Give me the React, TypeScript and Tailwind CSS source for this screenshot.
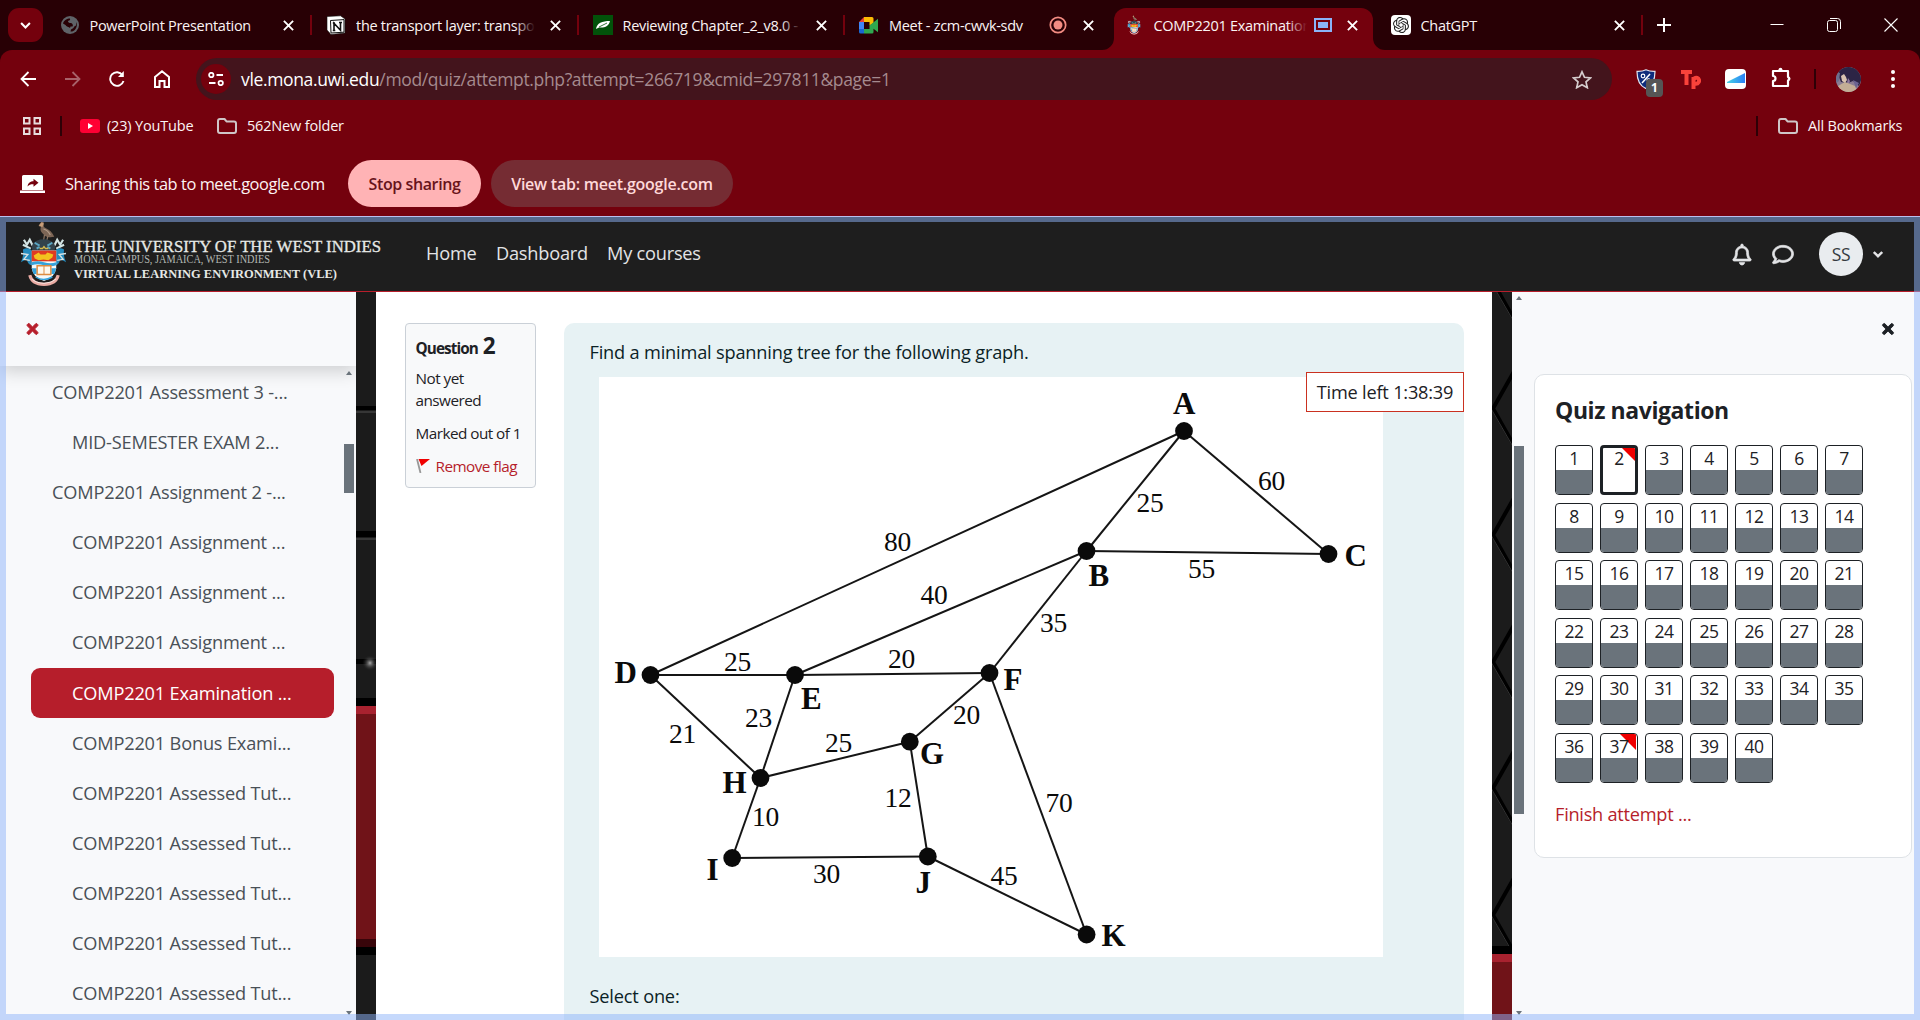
import type { ReactNode } from "react";
import { FaTimes, FaRegBell, FaRegComment } from "react-icons/fa";
import { SiOpenai } from "react-icons/si";

/* ---------- small shared icons ---------- */

function CloseGlyph() {
  return (
    <svg viewBox="0 0 10 10" className="h-[11px] w-[11px]" stroke="#fff" strokeWidth="1.7">
      <path d="M.8.8l8.4 8.4M9.2.8L.8 9.2" />
    </svg>
  );
}

function FolderIcon() {
  return (
    <svg viewBox="0 0 20 16" className="h-4 w-5 shrink-0" fill="none" stroke="#cfc6c7" strokeWidth="2" strokeLinejoin="round">
      <path d="M1 3a2 2 0 012-2h4.500l2 2.400H17a2 2 0 012 2V13a2 2 0 01-2 2H3a2 2 0 01-2-2z" />
    </svg>
  );
}

function Crest({ className }: { className: string }) {
  return (
    <svg viewBox="0 0 48 68" className={className}>
      <path d="M19 5.500L21 2.500c2-2 4-.5 3.500 2C24 6 24 7 26 8c4 1.500 7 4.500 9 9-4 .5-8 .5-10-1.500-2-2-4.500-4-4-7 .2-1.500.7-2.500.5-4z" fill="#7d6656" />
      <path d="M19 6l3-4 2 1-1 4z" fill="#c79d78" />
      <path d="M24 9q4 1 7 6" stroke="#b09a88" strokeWidth="1.200" fill="none" />
      <path d="M25 15l-1 6M28.500 16l-1 4" stroke="#8d7663" strokeWidth="1.200" />
      <path d="M4 20l3 5 3-5 3 6M3 25l8 4M44 20l-3 5-3-5-3 6M45 25l-8 4" stroke="#d3e4e4" strokeWidth="2.200" fill="none" />
      <path d="M13 32q-3-8 4-11 7-3 14 0 7 3 4 11z" fill="#33434c" />
      <path d="M15 23l5 3M33 23l-5 3M17 29l3-2M31 29l-3-2" stroke="#5aa7c4" strokeWidth="2" />
      <path d="M20 29h3l1.500-2 1.500 2h3" stroke="#d9b94c" strokeWidth="1.500" fill="none" />
      <path d="M3 30q5-3 9 1v15q-4-1-5-6-4 1-6 3 3-6 2-13zM45 30q-5-3-9 1v15q4-1 5-6 4 1 6 3-3-6-2-13z" fill="#258cbf" />
      <path d="M1 34l7 1-4 5 6 1M47 34l-7 1 4 5-6 1" stroke="#d9e3e4" strokeWidth="1.400" fill="none" />
      <path d="M12 31h25v18q-1 9-12.500 13Q13 58 12 49z" fill="#f6f8f8" />
      <path d="M12 31h25v11H12z" fill="#e03a22" />
      <path d="M14 36l5-3 2 2h5l2-2 6 2-1 3-4 3-5-1-5 1-4-2z" fill="#f3c21e" />
      <path d="M12 43q6-2 12.500 0T37 43v3q-6 2-12.500 0T12 46z" fill="#35a3dc" />
      <path d="M12 49h5v6h-3zM37 49h-5v6h3z" fill="#35a3dc" />
      <path d="M17.500 46.500h14v9h-14z" fill="#fdf8ee" stroke="#dd8c42" strokeWidth="1.500" />
      <path d="M24.500 46.500v9" stroke="#dd8c42" />
      <path d="M16 58q8 5 17 0" stroke="#35a3dc" strokeWidth="1.500" fill="none" />
      <path d="M10 56q2 9 14.500 9.500Q37 65 39 56" stroke="#e9aaa2" strokeWidth="3.200" fill="none" />
      <path d="M12 60q4 4 12.500 4.500 8-.5 12.500-4.500" stroke="#f7e4e0" strokeWidth="1" fill="none" />
    </svg>
  );
}

/* ---------- browser chrome ---------- */

type TabProps = { icon: ReactNode; title: string; extra?: ReactNode; tone?: string; divider?: boolean };

function Tab({ icon, title, extra, tone = "to-[#280005]", divider = true }: TabProps) {
  return (
    <div className="relative flex h-[50px] w-[266.5px] shrink-0 items-center pl-[14px] pr-[18px]">
      <span className="flex w-5 shrink-0 justify-center">{icon}</span>
      <span className="relative ml-[10px] h-6 min-w-0 flex-1 overflow-hidden whitespace-nowrap text-[14.500px] leading-[26px] tracking-[-0.020em] text-[#fbf4f4]">
        {title}
        <span className={`absolute right-0 top-0 h-6 w-5 bg-linear-to-r from-transparent ${tone}`} />
      </span>
      {extra}
      <span className="ml-[15px]">
        <CloseGlyph />
      </span>
      {divider && <span className="absolute right-0 top-[15px] h-5 w-[2px] bg-[#74010d]" />}
    </div>
  );
}

function TabStrip() {
  return (
    <div className="flex h-[50px] items-center bg-[#280005]">
      <div className="ml-2 mr-[2.500px] flex h-[34px] w-[35px] shrink-0 items-center justify-center rounded-[11px] bg-[#74010d]">
        <svg viewBox="0 0 10 6" className="h-[7px] w-[11px]" fill="none" stroke="#fff" strokeWidth="1.900">
          <path d="M1 .8l4 4 4-4" />
        </svg>
      </div>
      <Tab
        title="PowerPoint Presentation"
        icon={
          <svg viewBox="0 0 18 18" className="h-[18px] w-[18px]">
            <circle cx="9" cy="9" r="9" fill="#5f6368" />
            <path d="M2 7.500C3 4 6 2.500 9 2.500c.5 1.500-.5 2-2 2.500 0 1.500 1 2 3 2 1.500.5 2.500 2 1.500 3.500H9.500L9 12c-1-1-4-1.500-4.500-3z" fill="#280005" />
            <path d="M15.500 6c.8 2 .5 5-1 7-1.500 2-3.500 2.800-5 2.500l.5-2 2.500-1.500c.5-1.500 1-2 2.500-2.500z" fill="#280005" />
          </svg>
        }
      />
      <Tab
        title="the transport layer: transpo"
        icon={
          <svg viewBox="0 0 20 20" className="h-5 w-5">
            <path d="M1 1.500L14.500.8 19 4v14l-14 1.500L1 15z" fill="#fff" stroke="#111" strokeWidth=".6" />
            <path d="M4.500 5.500L18 4.600v12.600L5 18z" fill="#fff" stroke="#111" strokeWidth="1" />
            <path d="M8 15.500V8.200l6.500 7V7.500M6.800 8h2.200M13 7.500h3M6.800 15.500h2.500" fill="none" stroke="#111" strokeWidth="1.600" />
          </svg>
        }
      />
      <Tab
        title="Reviewing Chapter_2_v8.0 -"
        icon={
          <svg viewBox="0 0 20 20" className="h-5 w-5">
            <path d="M0 0h20v20H0z" fill="#02520a" />
            <path d="M3 14c1-6 6-8 14-8-1 5-5 7-11 6.500z" fill="#fff" />
            <path d="M6 12l8-4" stroke="#02520a" strokeWidth=".8" />
          </svg>
        }
      />
      <Tab
        title="Meet - zcm-cwvk-sdv"
        divider={false}
        extra={
          <svg viewBox="0 0 18 18" className="mr-px h-[18px] w-[18px]">
            <circle cx="9" cy="9" r="7.700" fill="none" stroke="#f28b82" strokeWidth="1.700" />
            <circle cx="9" cy="9" r="4.500" fill="#f28b82" />
          </svg>
        }
        icon={
          <svg viewBox="0 0 20 17" className="h-[17px] w-5">
            <path d="M0 5l5-5v5z" fill="#ea4335" />
            <path d="M5 0h8a1.500 1.500 0 011.500 1.500V6l-4 2.500V5H5z" fill="#fbbc04" />
            <path d="M0 5h5v7H0z" fill="#4285f4" />
            <path d="M0 12h5v4.500H1.500A1.500 1.500 0 010 15z" fill="#1967d2" />
            <path d="M5 12h5.500V8.500L19 1.800v13.400l-4.500-3.500V15a1.500 1.500 0 01-1.500 1.500H5z" fill="#2fa84f" />
          </svg>
        }
      />
      <div className="relative ml-[2px] mt-2 flex h-[42px] w-[259px] shrink-0 items-start rounded-t-[12px] bg-[#74010d]">
        <svg viewBox="0 0 12 12" className="absolute -left-[12px] bottom-0 h-3 w-3" fill="#74010d">
          <path d="M12 0v12H0A12 12 0 0012 0z" />
        </svg>
        <svg viewBox="0 0 12 12" className="absolute -right-[12px] bottom-0 h-3 w-3" fill="#74010d">
          <path d="M0 0v12h12A12 12 0 010 0z" />
        </svg>
        <div className="-ml-[4px] -mt-2">
          <Tab
            title="COMP2201 Examination"
            tone="to-[#74010d]"
            divider={false}
            icon={<Crest className="h-[20px] w-[14px]" />}
            extra={
              <svg viewBox="0 0 18 14" className="ml-[7px] h-[14px] w-[18px] shrink-0">
                <path d="M1 1h16v12H1z" fill="none" stroke="#8ab4f8" strokeWidth="2" />
                <path d="M4 4h10v6H4z" fill="#8ab4f8" />
              </svg>
            }
          />
        </div>
      </div>
      <div className="ml-[4px]">
        <Tab
          title="ChatGPT"
          icon={
            <span className="flex h-5 w-5 items-center justify-center rounded-[4px] bg-white">
              <SiOpenai className="h-4 w-4 text-[#222]" />
            </span>
          }
        />
      </div>
      <svg viewBox="0 0 14 14" className="ml-[14px] h-[14px] w-[14px]" stroke="#fff" strokeWidth="2">
        <path d="M7 0v14M0 7h14" />
      </svg>
      <div className="ml-auto flex items-center gap-[43px] pr-[22px]">
        <svg viewBox="0 0 14 14" className="h-[14px] w-[14px]" stroke="#fff" strokeWidth="1">
          <path d="M.5 6.500h13" />
        </svg>
        <svg viewBox="0 0 14 14" className="h-[14px] w-[14px]" fill="none" stroke="#fff" strokeWidth="1">
          <rect x=".5" y="2.500" width="10" height="11" rx="2" />
          <path d="M3 .5h7.500a3 3 0 013 3V11" />
        </svg>
        <svg viewBox="0 0 14 14" className="h-[14px] w-[14px]" stroke="#fff" strokeWidth="1.100">
          <path d="M.5.500l13 13M13.500.500l-13 13" />
        </svg>
      </div>
    </div>
  );
}

function Toolbar() {
  return (
    <div className="flex h-[58px] items-center pl-5 pr-[25px]">
      <svg viewBox="0 0 16 16" className="h-4 w-4" fill="none" stroke="#fff" strokeWidth="1.800">
        <path d="M16 8H1.500M8.500 1L1.500 8l7 7" />
      </svg>
      <svg viewBox="0 0 16 16" className="ml-[29px] h-4 w-4" fill="none" stroke="#a8626a" strokeWidth="1.800">
        <path d="M0 8h14.500M7.500 1l7 7-7 7" />
      </svg>
      <svg viewBox="0 0 16 16" className="ml-[28px] h-4 w-4" fill="none" stroke="#fff" strokeWidth="1.900">
        <path d="M14.500 10A6.800 6.800 0 1113.500 4" />
        <path d="M14.800 0v6H9z" fill="#fff" stroke="none" />
      </svg>
      <svg viewBox="0 0 16 18" className="ml-[29px] h-[18px] w-4" fill="none" stroke="#fff" strokeWidth="2">
        <path d="M1 7l7-5.700L15 7v10h-4.500v-6h-5v6H1z" />
      </svg>
      <div className="ml-[26px] flex h-[42px] w-[1416px] items-center rounded-full bg-[#43141c] pl-[5px] pr-5">
        <div className="flex h-[30px] w-[30px] items-center justify-center rounded-full bg-[#74010d]">
          <svg viewBox="0 0 16 14" className="h-[14px] w-4" fill="none" stroke="#fff" strokeWidth="1.800">
            <circle cx="3.300" cy="3" r="2.200" />
            <circle cx="12.700" cy="11" r="2.200" />
            <path d="M8.500 3H15M1 11h6.500" />
          </svg>
        </div>
        <p className="ml-[10px] whitespace-nowrap pt-px text-[17.500px] tracking-[-0.020em] text-[#a58a8e]">
          <span className="text-white">vle.mona.uwi.edu</span>/mod/quiz/attempt.php?attempt=266719&amp;cmid=297811&amp;page=1
        </p>
        <svg viewBox="0 0 20 19" className="ml-auto h-[19px] w-5" fill="none" stroke="#d5cccd" strokeWidth="1.700">
          <path d="M10 1.800l2.500 5.500 6 .6-4.500 4 1.300 5.800L10 14.700l-5.300 3 1.300-5.800-4.500-4 6-.6z" />
        </svg>
      </div>
      <span className="relative ml-[24px]">
        <svg viewBox="0 0 20 20" className="h-5 w-5">
          <path d="M10 .8c3 1.500 6 1.700 9 1.600 0 8-2 14-9 17.200C3 16.400 1 10.400 1 2.400c3 .1 6-.1 9-1.600z" fill="#0f2c7c" stroke="#dfe4ef" strokeWidth="1.200" />
          <path d="M6 14l8-9" stroke="#fff" strokeWidth="1.500" />
          <circle cx="7" cy="7" r="1.800" fill="none" stroke="#fff" strokeWidth="1.200" />
          <circle cx="12.500" cy="11" r="1.500" fill="none" stroke="#fff" />
        </svg>
        <span className="absolute left-[10px] top-[10px] flex h-[18px] w-[17px] items-center justify-center rounded-[4px] bg-[#555] text-[12px] font-bold leading-none text-white">
          1
        </span>
      </span>
      <span className="ml-[25px] flex w-5 text-[#f9423a]">
        <svg viewBox="0 0 20 20" className="h-5 w-5" fill="none" stroke="#f9423a" strokeWidth="4">
          <path d="M0 3h11M5.500 3v13M12.500 8v12M12.500 11.500a2.800 2.800 0 115 1.800 2.800 2.800 0 01-5 0" />
        </svg>
      </span>
      <span className="ml-[24px] flex h-5 w-[21px] items-center overflow-hidden rounded-[4px] bg-white">
        <svg viewBox="0 0 21 20" className="h-5 w-[21px]">
          <defs>
            <linearGradient id="wedge" x1="0" y1="0" x2="1" y2="0">
              <stop offset="0" stopColor="#46d3e6" />
              <stop offset="1" stopColor="#2b7ff5" />
            </linearGradient>
          </defs>
          <path d="M2 13L20 4v10H2z" fill="url(#wedge)" />
        </svg>
      </span>
      <svg viewBox="0 0 21 21" className="ml-[25px] -mt-1 h-[21px] w-[21px]" fill="none" stroke="#fff" strokeWidth="2.200" strokeLinejoin="round">
        <path d="M2 4h15v6a2 2 0 010 3.500V19H2v-5a2.500 2.500 0 000-5z" />
        <path d="M7.500 3.500a2 2 0 014 0zM17.500 9.800a2 2 0 010 4z" fill="#fff" stroke="none" />
        <circle cx="9.500" cy="2.500" r="1.800" fill="#fff" stroke="none" />
      </svg>
      <span className="ml-[22px] h-5 w-[2px] bg-[#2d0006]" />
      <svg viewBox="0 0 25 25" className="ml-[20px] h-[25px] w-[25px]">
        <clipPath id="face">
          <circle cx="12.500" cy="12.500" r="12.500" />
        </clipPath>
        <g clipPath="url(#face)">
          <path d="M0 0h25v25H0z" fill="#8b7d94" />
          <path d="M3 3l8-4 11 3 4 9-3 8-6-5-5 2-7-1-3-7z" fill="#2c2445" />
          <path d="M5 9l3-2 2 3 1 3-2 3-3-2z" fill="#d9c3b0" />
          <path d="M12 11l2 3-1 2-2 0z" fill="#8f7aa0" />
          <path d="M2 19l7-4 5 2 5 2 3 6H4z" fill="#c3ae96" />
          <path d="M17 13l6 3-3 5z" fill="#6a6391" />
          <path d="M0 5l4 1-1 8-3 2z" fill="#6c6f8d" />
        </g>
      </svg>
      <svg viewBox="0 0 4 18" className="ml-auto h-[18px] w-1" fill="#fff">
        <circle cx="2" cy="2" r="2" />
        <circle cx="2" cy="9" r="2" />
        <circle cx="2" cy="16" r="2" />
      </svg>
    </div>
  );
}

function BookmarksBar() {
  return (
    <div className="flex h-[36px] items-center pl-[23px] pr-[18px] text-[14.500px] tracking-[-0.012em] text-[#fbf4f4]">
      <svg viewBox="0 0 18 18" className="h-[18px] w-[18px]" fill="none" stroke="#e8dcdd" strokeWidth="2">
        <path d="M1 1h5.500v5.500H1zM11.500 1H17v5.500h-5.500zM1 11.500h5.500V17H1zM11.500 11.500H17V17h-5.500z" />
      </svg>
      <span className="ml-[19px] h-5 w-[2px] bg-[#2d0006]" />
      <svg viewBox="0 0 20 14" className="ml-[18px] h-[14px] w-5">
        <rect width="20" height="14" rx="3" fill="#ff0033" />
        <path d="M8 4l5 3-5 3z" fill="#fff" />
      </svg>
      <span className="ml-[7px] w-[87px] whitespace-nowrap">(23) YouTube</span>
      <span className="ml-[23px] mr-[10px] flex">
        <FolderIcon />
      </span>
      <span className="whitespace-nowrap">562New folder</span>
      <span className="ml-auto mr-[20px] h-5 w-[2px] bg-[#2d0006]" />
      <FolderIcon />
      <span className="ml-[10px] w-[94px] whitespace-nowrap">All Bookmarks</span>
    </div>
  );
}

function SharingBar() {
  return (
    <div className="flex h-[72px] items-center pl-5 pt-[7px] text-[16.400px] tracking-[-0.027em]">
      <svg viewBox="0 0 25 18" className="h-[18px] w-[25px]">
        <path d="M2 1.500A1.500 1.500 0 013.500 0h18A1.500 1.500 0 0123 1.500V15H2zM0 15.500h25V18H0z" fill="#fff" />
        <path d="M7.500 11.500c.5-4 3-5.200 6-5.300V3.800l5 4-5 4V9.300c-2.500-.1-4.500.5-6 2.200z" fill="#74010d" />
      </svg>
      <span className="ml-5 w-[262px] whitespace-nowrap pt-[2px] text-[#fdf3f3]">Sharing this tab to meet.google.com</span>
      <span className="ml-[21px] flex h-[47px] w-[133px] items-center justify-center rounded-full bg-[#ffb3b5] pt-px text-[16px] font-semibold tracking-[-0.025em] text-[#68131b]">
        Stop sharing
      </span>
      <span className="ml-[10px] flex h-[47px] w-[242px] items-center justify-center rounded-full bg-[#752c33] pt-px text-[16px] font-semibold tracking-[-0.015em] text-[#ffd9da]">
        View tab: meet.google.com
      </span>
    </div>
  );
}

/* ---------- site header ---------- */

function SiteHeader() {
  return (
    <header className="flex h-[76px] items-center border-b border-[#b61e2b] bg-[#1e1e1e] pt-[1px] text-[#e3e4e6]">
      <Crest className="mt-[-1px] ml-5 h-[67px] w-[47px] shrink-0" />
      <svg
        viewBox="0 0 310 48"
        className="ml-[5px] h-12 w-[310px] overflow-visible font-['Liberation_Serif',serif]"
        fill="#e6e9e6"
      >
        <text x="2" y="21.500" fontSize="17.500" textLength="307" lengthAdjust="spacingAndGlyphs" stroke="#e6e9e6" strokeWidth=".3">
          THE UNIVERSITY OF THE WEST INDIES
        </text>
        <text x="2" y="33" fontSize="12" textLength="196" lengthAdjust="spacingAndGlyphs" fill="#b3b8b3">
          MONA CAMPUS, JAMAICA, WEST INDIES
        </text>
        <text x="2" y="47.500" fontSize="13.500" fontWeight="bold" textLength="263" lengthAdjust="spacingAndGlyphs">
          VIRTUAL LEARNING ENVIRONMENT (VLE)
        </text>
      </svg>
      <nav className="ml-[44px] flex gap-5 whitespace-nowrap text-[18.200px] tracking-[-0.012em]">
        <span className="w-[50px]">Home</span>
        <span className="w-[91px]">Dashboard</span>
        <span>My courses</span>
      </nav>
      <div className="ml-auto flex items-center pr-[37px]">
        <FaRegBell className="h-[21px] w-5 overflow-visible" stroke="currentColor" strokeWidth="18" />
        <FaRegComment className="ml-5 h-[21px] w-[22px] overflow-visible" stroke="currentColor" strokeWidth="18" />
        <span className="ml-[25px] flex h-11 w-11 items-center justify-center rounded-full bg-[#e9ecef] text-[17.500px] tracking-[-0.020em] text-[#343a40]">
          SS
        </span>
        <svg viewBox="0 0 10 7" className="ml-[10px] h-[7px] w-[10px]" fill="none" stroke="#e3e4e6" strokeWidth="2.400">
          <path d="M.8 1L5 5.200 9.200 1" />
        </svg>
      </div>
    </header>
  );
}

/* ---------- course index ---------- */

const courseIndex = [
  { label: "COMP2201 Assessment 3 -...", top: true },
  { label: "MID-SEMESTER EXAM 2..." },
  { label: "COMP2201 Assignment 2 -...", top: true },
  { label: "COMP2201 Assignment ..." },
  { label: "COMP2201 Assignment ..." },
  { label: "COMP2201 Assignment ..." },
  { label: "COMP2201 Examination ...", active: true },
  { label: "COMP2201 Bonus Exami..." },
  { label: "COMP2201 Assessed Tut..." },
  { label: "COMP2201 Assessed Tut..." },
  { label: "COMP2201 Assessed Tut..." },
  { label: "COMP2201 Assessed Tut..." },
  { label: "COMP2201 Assessed Tut..." },
];

function CourseIndex() {
  return (
    <aside className="relative flex w-[356px] shrink-0 flex-col overflow-hidden bg-[#f8f9fb]">
      <div className="z-10 flex h-[74px] shrink-0 items-center bg-[#f8f9fb] pl-[26px] shadow-[0_6px_16px_rgba(0,0,0,0.16)]">
        <FaTimes className="h-4 w-[13px] overflow-visible text-[#b61e2b]" stroke="currentColor" strokeWidth="30" />
      </div>
      <ul className="mt-[1.300px] flex flex-col pl-[31px] pr-[22px] text-[18.200px] tracking-[-0.010em] text-[#495057]">
        {courseIndex.map((item, i) => (
          <li
            key={i}
            className={`flex h-[50.150px] shrink-0 items-center whitespace-nowrap rounded-[9px] ${item.top ? "pl-[21px]" : "pl-[41px]"} ${
              item.active ? "bg-[#b61e2b] text-white" : ""
            }`}
          >
            {item.label}
          </li>
        ))}
      </ul>
      <span className="absolute left-[344px] top-[152px] h-[49px] w-[10px] bg-[#6a737b]" />
      <span className="absolute left-[346px] top-[79px] z-20 border-x-[3px] border-b-[4px] border-x-transparent border-b-[#6a737b]" />
      <span className="absolute left-[346px] top-[719px] border-x-[3px] border-t-[4px] border-x-transparent border-t-[#6a737b]" />
    </aside>
  );
}

/* ---------- patterned page backdrop visible between columns ---------- */

function LeftBackdrop() {
  return (
    <svg viewBox="0 0 20 728" className="h-[728px] w-5 shrink-0">
      <defs>
        <radialGradient id="spark">
          <stop offset="0" stopColor="#aaa" />
          <stop offset="1" stopColor="#1b1b1b" stopOpacity="0" />
        </radialGradient>
      </defs>
      <path d="M0 0h20v728H0z" fill="#1b1b1b" />
      <path d="M0 114h20v4H0zM0 239h20v6H0zM0 367h20v5H0zM0 406h20v8H0zM0 655h20v8H0z" fill="#000" />
      <path d="M0 119h20v2H0zM0 246h20v2H0z" fill="#363636" />
      <circle cx="14" cy="371" r="8" fill="url(#spark)" />
      <path d="M0 414h20v8H0z" fill="#a8222f" />
      <path d="M0 422h20v225H0z" fill="#701318" />
      <path d="M0 647h20v8H0z" fill="#38050a" />
    </svg>
  );
}

function RightBackdrop() {
  const notches = [-10, 116.500, 243, 370, 496, 623];
  return (
    <svg viewBox="0 0 20 728" className="h-[728px] w-5 shrink-0">
      <path d="M0 0h20v728H0z" fill="#1b1b1b" />
      {notches.map((y) => (
        <g key={y} fill="none">
          <path d={`M22 ${y - 37}L1 ${y}L22 ${y + 37}`} stroke="#000" strokeWidth="4" />
          <path d={`M-1 ${y}L22 ${y + 40}`} stroke="#333" strokeWidth="1" />
        </g>
      ))}
      <path d="M0 654h20v8H0z" fill="#000" />
      <path d="M0 662h20v8H0z" fill="#a8222f" />
      <path d="M0 670h20v58H0z" fill="#701318" />
    </svg>
  );
}

/* ---------- weighted graph ---------- */

const nodes: Record<string, { x: number; y: number; lx: number; ly: number }> = {
  A: { x: 1184, y: 431, lx: 1173, ly: 413.5 },
  B: { x: 1086.5, y: 551, lx: 1088.5, ly: 585.5 },
  C: { x: 1328.5, y: 554, lx: 1344.5, ly: 565.5 },
  D: { x: 650.5, y: 675, lx: 614.5, ly: 683 },
  E: { x: 795, y: 675, lx: 801, ly: 708.5 },
  F: { x: 989.5, y: 673, lx: 1003.5, ly: 689.5 },
  G: { x: 909.8, y: 741.7, lx: 920, ly: 764 },
  H: { x: 760.5, y: 778, lx: 722.5, ly: 793 },
  I: { x: 732.2, y: 858, lx: 706.5, ly: 879.5 },
  J: { x: 927.8, y: 856.5, lx: 915.5, ly: 892.5 },
  K: { x: 1086.6, y: 934.5, lx: 1101.5, ly: 945.5 },
};

const edges: [string, string, number, number, number][] = [
  ["A", "D", 80, 884, 550.5],
  ["B", "E", 40, 920.5, 603.5],
  ["D", "E", 25, 724, 670.5],
  ["E", "F", 20, 888, 668],
  ["B", "F", 35, 1040, 632],
  ["A", "B", 25, 1136.5, 512],
  ["A", "C", 60, 1258, 489.5],
  ["B", "C", 55, 1188, 578],
  ["D", "H", 21, 669, 742.5],
  ["E", "H", 23, 745, 726.5],
  ["H", "G", 25, 825, 751.5],
  ["F", "G", 20, 953, 724],
  ["H", "I", 10, 752, 825.5],
  ["G", "J", 12, 884.5, 806.5],
  ["I", "J", 30, 813, 883],
  ["J", "K", 45, 990.5, 884.5],
  ["F", "K", 70, 1045.5, 811.5],
];

function Graph() {
  return (
    <svg viewBox="599 377 784 580" className="h-[580px] w-[784px] bg-white font-['Liberation_Serif',serif]" fill="#0a0a0a">
      {edges.map(([a, b, w, x, y]) => (
        <g key={a + b}>
          <line x1={nodes[a].x} y1={nodes[a].y} x2={nodes[b].x} y2={nodes[b].y} stroke="#151515" strokeWidth="2" />
          <text x={x} y={y} fontSize="27.500">
            {w}
          </text>
        </g>
      ))}
      {Object.entries(nodes).map(([name, n]) => (
        <g key={name}>
          <circle cx={n.x} cy={n.y} r="8.900" />
          <text x={n.lx} y={n.ly} fontSize="31" fontWeight="bold">
            {name}
          </text>
        </g>
      ))}
    </svg>
  );
}

/* ---------- question ---------- */

function QuestionInfo() {
  return (
    <div className="h-[165px] w-[131px] shrink-0 rounded-[4px] border border-[#cad0d7] bg-[#f8f9fa] pl-[9.500px] pt-[7px] text-[15.300px] leading-[22px] tracking-[-0.035em] text-[#1d2125]">
      <h3 className="flex h-[30px] items-baseline gap-[5px] whitespace-nowrap font-bold leading-[30px] tracking-[-0.060em]">
        Question <span className="text-[22.500px]">2</span>
      </h3>
      <p className="mt-[6px]">
        Not yet
        <br />
        answered
      </p>
      <p className="mt-[11px] whitespace-nowrap">Marked out of 1</p>
      <p className="mt-[11px] flex items-center whitespace-nowrap text-[#b61e2b]">
        <svg viewBox="0 0 14 14" className="mr-[6px] h-[14px] w-[14px]">
          <path d="M1 0l3.500 14" stroke="#999" strokeWidth="1.800" />
          <path d="M2.500 0H14L5.500 7z" fill="#f00000" />
        </svg>
        Remove flag
      </p>
    </div>
  );
}

function Question() {
  return (
    <main className="relative flex w-[1116px] shrink-0 items-start bg-white pl-[29px] pt-[31px]">
      <QuestionInfo />
      <section className="ml-7 h-[697px] w-[900px] shrink-0 rounded-t-[10px] bg-[#e7f2f4] pl-[25.500px] pt-[15px] text-[18.200px] leading-7 tracking-[-0.010em] text-[#0b2226]">
        <p>Find a minimal spanning tree for the following graph.</p>
        <div className="ml-[9.500px] mt-[11px] h-[580px]">
          <Graph />
        </div>
        <p className="mt-[25px]">Select one:</p>
      </section>
      <div className="absolute right-[28px] top-[80px] flex h-10 w-[158px] items-center justify-center whitespace-nowrap border border-[#ca3120] bg-white pt-[2px] text-[18.200px] tracking-[-0.012em] text-[#1d2125]">
        Time left 1:38:39
      </div>
    </main>
  );
}

/* ---------- quiz navigation ---------- */

function NavButton({ n }: { n: number }) {
  const current = n === 2;
  const flagged = n === 2 || n === 37;
  return (
    <span
      className={`relative flex h-[50px] w-[38px] flex-col overflow-hidden rounded-[4px] border-[#1d2125] bg-white text-center text-[17.500px] leading-[25px] tracking-[-0.030em] text-[#1d2125] ${
        current ? "border-[3px]" : "border"
      }`}
    >
      {flagged && (
        <svg
          viewBox="0 0 16 16"
          className={current ? "absolute right-0 top-0 h-[13px] w-[13px]" : "absolute right-[1px] top-0 h-4 w-4"}
          fill="#f00000"
        >
          <path d="M0 0h16v16z" />
        </svg>
      )}
      <span className={current ? "relative -mt-[2px] h-6" : "relative h-6"}>{n}</span>
      {!current && <span className="flex-1 bg-[#6a737b]" />}
    </span>
  );
}

function QuizSidebar() {
  return (
    <aside className="relative flex-1 bg-[#f8f9fb] pl-[22px]">
      <div className="flex h-[82px] items-center justify-end pb-[9px] pr-[25px]">
        <FaTimes className="h-4 w-[14px] overflow-visible text-[#1d2125]" stroke="currentColor" strokeWidth="30" />
      </div>
      <section className="h-[484px] w-[378px] rounded-[10px] border border-[#dee2e6] bg-white pl-5 pt-[19px]">
        <h2 className="text-[23px] font-bold leading-[32px] tracking-[-0.018em] text-[#1d2125]">Quiz navigation</h2>
        <div className="mt-[19px] grid w-[315px] grid-cols-7 gap-y-[7.600px]">
          {Array.from({ length: 40 }, (_, i) => (
            <NavButton key={i} n={i + 1} />
          ))}
        </div>
        <a className="mt-[17px] block text-[18.200px] leading-7 tracking-[-0.014em] text-[#b61e2b]">Finish attempt ...</a>
      </section>
      <span className="absolute left-[2px] top-[154px] h-[368px] w-[10px] bg-[#6a737b]" />
      <span className="absolute left-[4px] top-[4px] border-x-[3px] border-b-[4px] border-x-transparent border-b-[#6a737b]" />
      <span className="absolute left-[4px] top-[719px] border-x-[3px] border-t-[4px] border-x-transparent border-t-[#6a737b]" />
    </aside>
  );
}

export default function App() {
  return (
    <div className="h-[1020px] w-[1920px] overflow-hidden bg-[#280005] font-['Open_Sans',sans-serif]">
      <TabStrip />
      <div className="h-[166px] rounded-t-[12px] bg-[#74010d]">
        <Toolbar />
        <BookmarksBar />
        <SharingBar />
      </div>
      <div className="relative h-[804px] overflow-hidden">
        <SiteHeader />
        <div className="flex h-[728px]">
          <CourseIndex />
          <LeftBackdrop />
          <Question />
          <RightBackdrop />
          <QuizSidebar />
        </div>
        <div className="pointer-events-none absolute inset-0 z-30 border-[6px] border-[rgba(142,180,250,0.5)]" />
        <div className="absolute inset-x-0 top-0 z-30 h-px bg-[#b9bfee]" />
      </div>
    </div>
  );
}
